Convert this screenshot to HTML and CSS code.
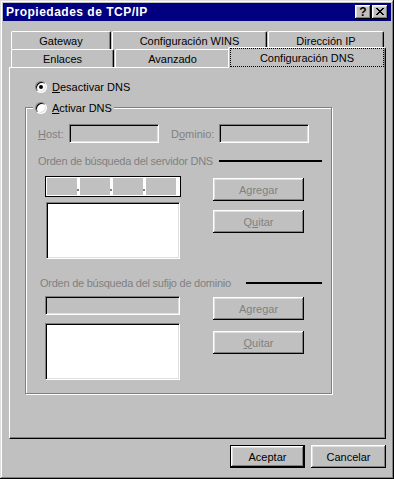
FILE: index.html
```html
<!DOCTYPE html>
<html lang="es">
<head>
    <meta charset="UTF-8">
    <title>Propiedades de TCP/IP</title>
    <link rel="stylesheet" href="styles.css">
</head>
<body>
    <div class="window">
        <div class="titlebar">
            <span class="title">Propiedades de TCP/IP</span>
            <div class="title-buttons">
                <span class="tbtn help">?</span>
                <span class="tbtn close">
                    <svg width="16" height="14" viewBox="0 0 16 14" shape-rendering="crispEdges">
                        <path fill="#000" d="M4 3h2v1h-2z M10 3h2v1h-2z M5 4h2v1h-2z M9 4h2v1h-2z M6 5h4v1h-4z M7 6h2v1h-2z M6 7h4v1h-4z M5 8h2v1h-2z M9 8h2v1h-2z M4 9h2v1h-2z M10 9h2v1h-2z"/>
                    </svg>
                </span>
            </div>
        </div>

        <div class="dialog">
            <div class="tab-row">
                <div class="tab tab-gateway">Gateway</div>
                <div class="tab tab-wins">Configuración WINS</div>
                <div class="tab tab-ip">Dirección IP</div>
            </div>
            <div class="tab-row">
                <div class="tab tab-enlaces">Enlaces</div>
                <div class="tab tab-avanzado">Avanzado</div>
                <div class="tab tab-dns selected"><span class="focus">Configuración DNS</span></div>
            </div>

            <div class="panel">
                <div class="option first">
                    <span class="radio checked"></span>
                    <span><u>D</u>esactivar DNS</span>
                </div>

                <div class="group">
                    <div class="option caption">
                        <span class="radio"></span>
                        <span><u>A</u>ctivar DNS</span>
                    </div>

                    <div class="host-row">
                        <span class="lbl-host"><u>H</u>ost:</span>
                        <span class="field disabled w90"></span>
                        <span class="lbl-dom">D<u>o</u>minio:</span>
                        <span class="field disabled w90"></span>
                    </div>

                    <div class="section-title">
                        <span class="section-label">Orden de búsqueda del servidor DNS</span>
                        <span class="rule rule-dns"></span>
                    </div>
                    <div class="columns">
                        <div class="col-left">
                            <div class="ipbox">
                                <span class="seg"></span><span class="dot"></span>
                                <span class="seg"></span><span class="dot"></span>
                                <span class="seg"></span><span class="dot"></span>
                                <span class="seg"></span>
                            </div>
                            <div class="listbox list-dns"></div>
                        </div>
                        <div class="col-right">
                            <button class="btn add-dns" disabled>Agre<u>g</u>ar</button>
                            <button class="btn del-dns" disabled>Q<u>u</u>itar</button>
                        </div>
                    </div>

                    <div class="section-title second">
                        <span class="section-label">Orden de búsqueda del sufijo de dominio</span>
                        <span class="rule rule-suffix"></span>
                    </div>
                    <div class="columns second">
                        <div class="col-left">
                            <span class="field disabled suffix-input"></span>
                            <div class="listbox list-suffix"></div>
                        </div>
                        <div class="col-right">
                            <button class="btn add-suffix" disabled>A<u>g</u>regar</button>
                            <button class="btn del-suffix" disabled><u>Q</u>uitar</button>
                        </div>
                    </div>
                </div>
            </div>

            <div class="actions">
                <button class="btn default">Aceptar</button>
                <button class="btn">Cancelar</button>
            </div>
        </div>
    </div>
</body>
</html>
```

FILE: styles.css
```css
body {
    margin: 0;
    background-color: #c0c0c0;
    font-family: "Liberation Sans", Arial, sans-serif;
    font-size: 11px;
    color: #000;
}

.window {
    width: 394px;
    height: 479px;
    box-sizing: border-box;
    padding: 3px;
    background-color: #c0c0c0;
    box-shadow: inset -1px -1px #000, inset 1px 1px #dfdfdf,
                inset -2px -2px #808080, inset 2px 2px #fff;
}

/* barra de titulo */
.titlebar {
    height: 18px;
    background-color: #000080;
    display: flex;
    align-items: center;
    justify-content: space-between;
    padding: 0 3px 0 3px;
    color: #fff;
    font-weight: bold;
}

.title {
    font-size: 12px;
    letter-spacing: 0.5px;
}

.title-buttons {
    display: flex;
    gap: 1px;
}

.tbtn {
    width: 16px;
    height: 14px;
    box-sizing: border-box;
    background-color: #c0c0c0;
    color: #000;
    display: flex;
    align-items: center;
    justify-content: center;
    font-size: 12px;
    box-shadow: inset -1px -1px #000, inset 1px 1px #fff,
                inset -2px -2px #808080, inset 2px 2px #dfdfdf;
}

.tbtn svg {
    display: block;
}

.dialog {
    padding: 10px 5px 0 6px;
}

/* pestañas */
.tab-row {
    display: flex;
    height: 18px;
    padding: 0 2px;
}

.tab {
    box-sizing: border-box;
    height: 18px;
    border: 1px solid #fff;
    border-bottom: none;
    border-right-color: #000;
    border-radius: 2px 2px 0 0;
    box-shadow: inset -1px 0 #808080;
    background-color: #c0c0c0;
    display: flex;
    align-items: center;
    justify-content: center;
}

.tab-gateway { width: 100px; margin-right: 1px; }
.tab-wins { width: 155px; margin-right: 1px; }
.tab-ip { width: 116px; }
.tab-enlaces { width: 103px; margin-right: 1px; }
.tab-avanzado { width: 115px; }
.tab-dns { width: 154px; }

.tab.selected {
    width: 158px;
    height: 21px;
    margin: -2px -2px -1px -2px;
    padding: 0 1px 1px 1px;
    position: relative;
    z-index: 1;
    align-items: stretch;
}

.focus {
    flex: 1;
    border: 1px dotted #000;
    display: flex;
    align-items: center;
    justify-content: center;
}

/* panel */
.panel {
    box-sizing: border-box;
    height: 372px;
    border: 1px solid;
    border-color: #fff #000 #000 #fff;
    box-shadow: inset -1px -1px #808080;
    padding-top: 13px;
}

.option {
    display: flex;
    align-items: center;
    height: 12px;
    gap: 5px;
}

.option.first {
    margin-left: 25px;
}

.radio {
    width: 12px;
    height: 12px;
    box-sizing: border-box;
    flex: none;
    border-radius: 50%;
    background-color: #fff;
    border: 1px solid;
    border-color: #808080 #fff #fff #808080;
    box-shadow: inset 1px 1px #000, inset -1px -1px #dfdfdf;
    position: relative;
}

.radio.checked::after {
    content: "";
    position: absolute;
    left: 3px;
    top: 3px;
    width: 4px;
    height: 4px;
    border-radius: 50%;
    background-color: #000;
}

.group {
    width: 307px;
    box-sizing: border-box;
    margin: 14px 0 0 15px;
    border: 1px solid #808080;
    box-shadow: 1px 1px #fff, inset 1px 1px #fff;
    padding: 0 0 13px 12px;
    color: #808080;
}

.option.caption {
    width: fit-content;
    margin: -6px 0 0 -5px;
    padding: 0 2px;
    background-color: #c0c0c0;
    color: #000;
}

.host-row {
    display: flex;
    align-items: center;
    height: 19px;
    margin-top: 10px;
}

.lbl-host { width: 31px; }
.lbl-dom { width: 48px; margin-left: 12px; }

.field {
    display: block;
    box-sizing: border-box;
    height: 19px;
    background-color: #fff;
    border: 1px solid;
    border-color: #808080 #fff #fff #808080;
    box-shadow: inset 1px 1px #000, inset -1px -1px #dfdfdf;
}

.field.disabled {
    background-color: #c0c0c0;
}

.w90 { width: 90px; }

.section-title {
    display: flex;
    align-items: center;
    height: 13px;
    margin-top: 11px;
}

.section-title.second {
    margin-top: 17px;
    padding-left: 2px;
}

.section-label {
    flex: none;
    white-space: nowrap;
    letter-spacing: -0.25px;
}

.rule {
    flex: none;
    height: 2px;
    background-color: #000;
    margin-left: auto;
    margin-right: 9px;
}

.rule-dns { width: 103px; }
.rule-suffix { width: 76px; }

.columns {
    display: flex;
    gap: 32px;
    margin: 9px 0 0 7px;
}

.columns.second {
    margin-top: 7px;
}

.col-left {
    width: 136px;
    display: flex;
    flex-direction: column;
}

.col-right {
    display: flex;
    flex-direction: column;
}

.ipbox {
    box-sizing: border-box;
    width: 136px;
    height: 21px;
    border: 1px solid #000;
    background-color: #fff;
    padding: 1px;
    display: flex;
}

.seg {
    width: 30px;
    background-color: #c0c0c0;
}

.dot {
    width: 3px;
    box-sizing: border-box;
    padding-top: 11px;
}

.dot::after {
    content: "";
    display: block;
    width: 2px;
    height: 2px;
    background-color: #808080;
}

.listbox {
    box-sizing: border-box;
    height: 57px;
    background-color: #fff;
    border: 1px solid;
    border-color: #808080 #fff #fff #808080;
    box-shadow: inset 1px 1px #000, inset -1px -1px #dfdfdf;
}

.list-dns { width: 134px; margin: 5px 0 0 1px; }
.suffix-input { width: 135px; }
.list-suffix { width: 135px; margin-top: 8px; }

/* botones */
.btn {
    width: 91px;
    height: 23px;
    box-sizing: border-box;
    padding: 0;
    border: none;
    font: inherit;
    color: #000;
    background-color: #c0c0c0;
    box-shadow: inset -1px -1px #000, inset 1px 1px #fff,
                inset -2px -2px #808080, inset 2px 2px #dfdfdf;
}

.btn:disabled {
    color: #808080;
}

.add-dns { margin-top: 2px; }
.del-dns { margin-top: 9px; }
.add-suffix { margin-top: 1px; }
.del-suffix { margin-top: 11px; }

.actions {
    display: flex;
    justify-content: flex-end;
    gap: 6px;
    margin-top: 6px;
}

.actions .btn {
    width: 75px;
}

.btn.default {
    border: 1px solid #000;
}
```
